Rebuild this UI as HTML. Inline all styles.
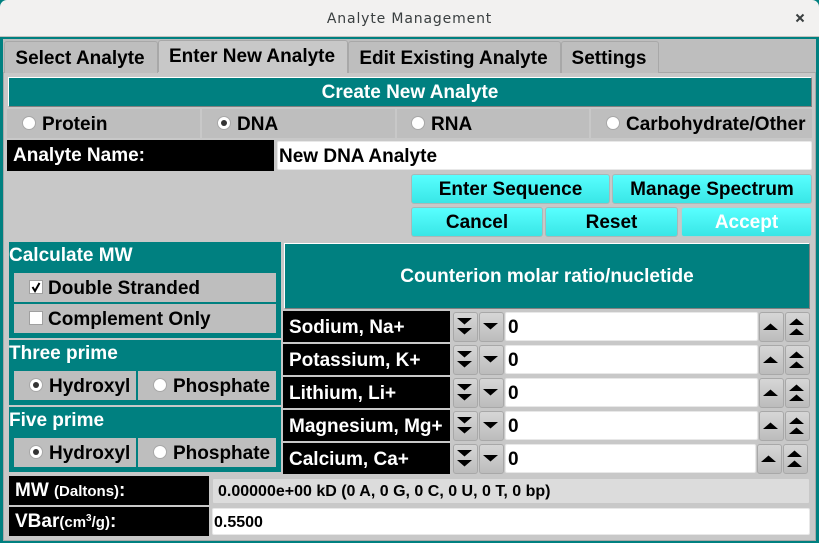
<!DOCTYPE html>
<html><head><meta charset="utf-8"><style>
html,body{margin:0;padding:0;width:819px;height:543px;overflow:hidden;background:#008080}
*{box-sizing:border-box}
div,input{position:absolute}
#w{left:0;top:0;width:819px;height:543px;font:bold 19px/1 "Liberation Sans",sans-serif;color:#000;background:#008080;overflow:hidden}
.t{white-space:nowrap}
.tab{background:#bebebe;border:1px solid #a8a8a8;border-bottom:0;border-radius:3px 3px 0 0;text-align:center;padding-right:2px;white-space:nowrap}
.cell{background:#bebebe}
.teal{background:#008080;color:#fff}
.blk{background:#000;color:#fff;white-space:nowrap}
.btn{background:linear-gradient(#58ffff,#39e6e6);border:1px solid #a8b8b8;border-radius:3px;text-align:center;white-space:nowrap}
.sp{background:linear-gradient(#d6d6d6,#bcbcbc);border:1px solid #a8a8a8;border-radius:3px;width:25px;height:30px}
.sp svg{position:absolute;left:0;top:0}
.in{background:#fff;border-radius:2px;border:1px solid #e8e8e8;white-space:nowrap;padding-left:2px}
.r{width:14px;height:14px;border-radius:50%;background:#fff;border:1px solid #a8a8a8}
.r.on::after{content:"";position:absolute;left:3px;top:3px;width:6px;height:6px;border-radius:50%;background:#333}
</style></head><body><div id="w">
<div style="left:0;top:0;width:819px;height:37px;background:#f2f1f0;border-radius:7px 7px 0 0;border-bottom:1px solid #c4c2be"></div>
<div class="t" style="left:0;top:12px;width:819px;text-align:center;font:14px/1 'DejaVu Sans',sans-serif;letter-spacing:.85px;color:#3a3f40">Analyte Management</div>
<svg style="position:absolute;left:795px;top:13px" width="10" height="10"><path d="M1.5 1.5L8.5 8.5M8.5 1.5L1.5 8.5" stroke="#3a3f40" stroke-width="2"/></svg>
<div style="left:3px;top:39px;width:813px;height:502px;background:#c8c8c8"></div>
<div style="left:3px;top:39px;width:813px;height:33px;background:#bebebe"></div>
<div style="left:3px;top:72px;width:813px;height:469px;background:#c8c8c8;border:1px solid #a8a8a8"></div>

<div class="tab" style="left:4px;top:41px;width:154px;height:32px;line-height:33px">Select Analyte</div>
<div class="tab" style="left:158px;top:40px;width:190px;height:33px;line-height:32px;background:#c8c8c8">Enter New Analyte</div>
<div class="tab" style="left:348px;top:41px;width:213px;height:32px;line-height:33px">Edit Existing Analyte</div>
<div class="tab" style="left:561px;top:41px;width:98px;height:32px;line-height:33px">Settings</div>
<div style="left:158px;top:72px;width:189px;height:2px;background:#c8c8c8"></div>

<div class="teal" style="left:8px;top:77px;width:804px;height:30px;border:1px solid;border-color:#fff #808080 #808080 #fff;text-align:center;line-height:30px">Create New Analyte</div>

<div class="cell" style="left:7px;top:109px;width:193px;height:29px"></div>
<div class="cell" style="left:202px;top:109px;width:193px;height:29px"></div>
<div class="cell" style="left:397px;top:109px;width:192px;height:29px"></div>
<div class="cell" style="left:591px;top:109px;width:221px;height:29px"></div>
<div class="r" style="left:22px;top:116px"></div><div class="t" style="left:42px;top:115px">Protein</div>
<div class="r on" style="left:217px;top:116px"></div><div class="t" style="left:237px;top:115px">DNA</div>
<div class="r" style="left:411px;top:116px"></div><div class="t" style="left:431px;top:115px">RNA</div>
<div class="r" style="left:606px;top:116px"></div><div class="t" style="left:626px;top:115px">Carbohydrate/Other</div>

<div class="blk" style="left:7px;top:140px;width:267px;height:31px;padding-left:6px;line-height:31px">Analyte Name:</div>
<div class="in" style="left:277px;top:141px;width:535px;height:29px;line-height:30px;padding-left:1px">New DNA Analyte</div>

<div class="btn" style="left:411px;top:174px;width:199px;height:30px;line-height:30px">Enter Sequence</div>
<div class="btn" style="left:612px;top:174px;width:200px;height:30px;line-height:30px">Manage Spectrum</div>
<div class="btn" style="left:411px;top:207px;width:132px;height:30px;line-height:30px">Cancel</div>
<div class="btn" style="left:545px;top:207px;width:133px;height:30px;line-height:30px">Reset</div>
<div class="btn" style="left:681px;top:207px;width:131px;height:30px;line-height:30px;color:#fff;border-color:#b8cccc">Accept</div>

<div class="teal" style="left:9px;top:242px;width:272px;height:96px"></div>
<div class="t" style="left:9px;top:246px;color:#fff">Calculate MW</div>
<div class="cell" style="left:14px;top:273px;width:262px;height:29px"></div>
<div class="cell" style="left:14px;top:304px;width:262px;height:29px"></div>
<div style="left:29px;top:280px;width:14px;height:14px;background:#fff;border:1px solid #a0a0a0"></div>
<svg style="position:absolute;left:29px;top:280px" width="14" height="14"><path d="M3.5 7L6 11L10.5 3" fill="none" stroke="#000" stroke-width="2"/></svg>
<div class="t" style="left:48px;top:279px">Double Stranded</div>
<div style="left:29px;top:311px;width:14px;height:14px;background:#fff;border:1px solid #a0a0a0"></div>
<div class="t" style="left:48px;top:310px">Complement Only</div>

<div class="teal" style="left:9px;top:340px;width:272px;height:65px"></div>
<div class="t" style="left:9px;top:344px;color:#fff">Three prime</div>
<div class="cell" style="left:14px;top:371px;width:122px;height:29px"></div>
<div class="cell" style="left:138px;top:371px;width:138px;height:29px"></div>
<div class="r on" style="left:29px;top:378px"></div><div class="t" style="left:49px;top:377px">Hydroxyl</div>
<div class="r" style="left:153px;top:378px"></div><div class="t" style="left:173px;top:377px">Phosphate</div>

<div class="teal" style="left:9px;top:407px;width:272px;height:65px"></div>
<div class="t" style="left:9px;top:411px;color:#fff">Five prime</div>
<div class="cell" style="left:14px;top:438px;width:122px;height:29px"></div>
<div class="cell" style="left:138px;top:438px;width:138px;height:29px"></div>
<div class="r on" style="left:29px;top:445px"></div><div class="t" style="left:49px;top:444px">Hydroxyl</div>
<div class="r" style="left:153px;top:445px"></div><div class="t" style="left:173px;top:444px">Phosphate</div>

<div class="teal" style="left:284px;top:243px;width:526px;height:66px;border:1px solid;border-color:#fff #808080 #808080 #fff;text-align:center;line-height:66px">Counterion molar ratio/nucletide</div>

<div class="blk" style="left:283px;top:311px;width:167px;height:31px;padding-left:6px;line-height:33px">Sodium, Na+</div>
<div class="blk" style="left:283px;top:344px;width:167px;height:31px;padding-left:6px;line-height:33px">Potassium, K+</div>
<div class="blk" style="left:283px;top:377px;width:167px;height:31px;padding-left:6px;line-height:33px">Lithium, Li+</div>
<div class="blk" style="left:283px;top:410px;width:167px;height:31px;padding-left:6px;line-height:33px">Magnesium, Mg+</div>
<div class="blk" style="left:283px;top:443px;width:167px;height:31px;padding-left:6px;line-height:33px">Calcium, Ca+</div>

<div class="sp" style="left:453px;top:312px"><svg width="25" height="30"><path d="M3 5H18L10.5 11.5ZM3 15H18L10.5 21.5Z"/></svg></div>
<div class="sp" style="left:479px;top:312px"><svg width="25" height="30"><path d="M3 10H18L10.5 16.5Z"/></svg></div>
<div class="in" style="left:505px;top:312px;width:253px;height:29px;line-height:30px">0</div>
<div class="sp" style="left:759px;top:312px"><svg width="25" height="30"><path d="M3 17H18L10.5 10.5Z"/></svg></div>
<div class="sp" style="left:785px;top:312px"><svg width="25" height="30"><path d="M3 12H18L10.5 5.5ZM3 22H18L10.5 15.5Z"/></svg></div>

<div class="sp" style="left:453px;top:345px"><svg width="25" height="30"><path d="M3 5H18L10.5 11.5ZM3 15H18L10.5 21.5Z"/></svg></div>
<div class="sp" style="left:479px;top:345px"><svg width="25" height="30"><path d="M3 10H18L10.5 16.5Z"/></svg></div>
<div class="in" style="left:505px;top:345px;width:253px;height:29px;line-height:30px">0</div>
<div class="sp" style="left:759px;top:345px"><svg width="25" height="30"><path d="M3 17H18L10.5 10.5Z"/></svg></div>
<div class="sp" style="left:785px;top:345px"><svg width="25" height="30"><path d="M3 12H18L10.5 5.5ZM3 22H18L10.5 15.5Z"/></svg></div>

<div class="sp" style="left:453px;top:378px"><svg width="25" height="30"><path d="M3 5H18L10.5 11.5ZM3 15H18L10.5 21.5Z"/></svg></div>
<div class="sp" style="left:479px;top:378px"><svg width="25" height="30"><path d="M3 10H18L10.5 16.5Z"/></svg></div>
<div class="in" style="left:505px;top:378px;width:253px;height:29px;line-height:30px">0</div>
<div class="sp" style="left:759px;top:378px"><svg width="25" height="30"><path d="M3 17H18L10.5 10.5Z"/></svg></div>
<div class="sp" style="left:785px;top:378px"><svg width="25" height="30"><path d="M3 12H18L10.5 5.5ZM3 22H18L10.5 15.5Z"/></svg></div>

<div class="sp" style="left:453px;top:411px"><svg width="25" height="30"><path d="M3 5H18L10.5 11.5ZM3 15H18L10.5 21.5Z"/></svg></div>
<div class="sp" style="left:479px;top:411px"><svg width="25" height="30"><path d="M3 10H18L10.5 16.5Z"/></svg></div>
<div class="in" style="left:505px;top:411px;width:253px;height:29px;line-height:30px">0</div>
<div class="sp" style="left:759px;top:411px"><svg width="25" height="30"><path d="M3 17H18L10.5 10.5Z"/></svg></div>
<div class="sp" style="left:785px;top:411px"><svg width="25" height="30"><path d="M3 12H18L10.5 5.5ZM3 22H18L10.5 15.5Z"/></svg></div>

<div class="sp" style="left:453px;top:444px"><svg width="25" height="30"><path d="M3 5H18L10.5 11.5ZM3 15H18L10.5 21.5Z"/></svg></div>
<div class="sp" style="left:479px;top:444px"><svg width="25" height="30"><path d="M3 10H18L10.5 16.5Z"/></svg></div>
<div class="in" style="left:505px;top:444px;width:251px;height:29px;line-height:30px">0</div>
<div class="sp" style="left:757px;top:444px"><svg width="25" height="30"><path d="M3 17H18L10.5 10.5Z"/></svg></div>
<div class="sp" style="left:783px;top:444px"><svg width="25" height="30"><path d="M3 12H18L10.5 5.5ZM3 22H18L10.5 15.5Z"/></svg></div>

<div class="blk" style="left:9px;top:476px;width:200px;height:29px;padding-left:6px;line-height:30px">MW <span style="font-size:15px">(Daltons)</span>:</div>
<div class="blk" style="left:9px;top:507px;width:200px;height:29px;padding-left:6px;line-height:30px">VBar<span style="font-size:15px">(cm<sup style="font-size:10px;line-height:0">3</sup>/g)</span>:</div>
<div class="t" style="left:212px;top:478px;width:598px;height:26px;background:#dcdcdc;border:1px solid #c8c8c8;border-radius:2px;font-size:16px;line-height:26px;padding-left:5px">0.00000e+00 kD (0 A, 0 G, 0 C, 0 U, 0 T, 0 bp)</div>
<div class="in" style="left:212px;top:508px;width:598px;height:27px;font-size:16px;line-height:27px;padding-left:1px">0.5500</div>
</div></body></html>
